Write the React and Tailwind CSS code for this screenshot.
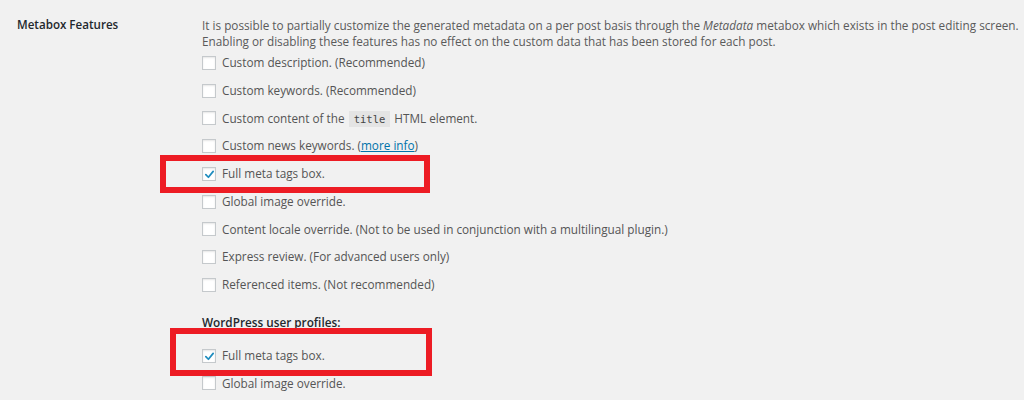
const rows = [
  { label: 'Custom description. (Recommended)' },
  { label: 'Custom keywords. (Recommended)' },
  { label: 'title' },
  { label: 'news' },
  { label: 'Full meta tags box.', checked: true, marked: true },
  { label: 'Global image override.' },
  { label: 'Content locale override. (Not to be used in conjunction with a multilingual plugin.)' },
  { label: 'Express review. (For advanced users only)' },
  { label: 'Referenced items. (Not recommended)' },
];

function Checkbox({ checked }) {
  return (
    <span className="relative flex h-[14px] w-[14px] shrink-0 items-center justify-center border border-[#c5c9cc] bg-white shadow-[inset_0_1px_2px_rgba(0,0,0,0.1)]">
      {checked && (
        <svg width="11" height="11" viewBox="0 0 12 12" className="mt-[1px]">
          <path d="M2 6.2 L4.8 9 L10 2.6" fill="none" stroke="#1e8cbe" strokeWidth="1.9" strokeLinecap="round" strokeLinejoin="round" />
        </svg>
      )}
    </span>
  );
}

function Label({ label }) {
  if (label === 'title') {
    return (
      <span>
        Custom content of the{' '}
        <code className="mx-[1px] bg-[#e4e4e4] px-[5px] py-[2px] font-['DejaVu_Sans_Mono',monospace] text-[10.5px] text-[#444]">title</code>{' '}
        HTML element.
      </span>
    );
  }
  if (label === 'news') {
    return (
      <span>
        Custom news keywords. (<a className="text-[#0073aa] underline">more info</a>)
      </span>
    );
  }
  return <span>{label}</span>;
}

function Row({ row }) {
  return (
    <div className="relative flex h-[27.75px] items-center gap-[6px]">
      <Checkbox checked={row.checked} />
      <Label label={row.label} />
      {row.marked && (
        <div className="pointer-events-none absolute left-[-42px] top-[-5px] h-[38px] w-[270px] border-[6px] border-[#ed1c24]" />
      )}
    </div>
  );
}

export default function App() {
  return (
    <div className="h-[400px] w-[1024px] overflow-hidden bg-[#f1f1f1] font-['Open_Sans',sans-serif] text-[11.75px] text-[#555] whitespace-nowrap">
      <div className="flex pt-[17px]">
        {/* Label column */}
        <div className="w-[202px] shrink-0 pl-[17px] text-[11.6px] font-semibold leading-[16px] text-[#23282d]">
          Metabox Features
        </div>

        {/* Settings column */}
        <div className="flex-1">
          <p className="leading-[16px] text-[#5a5a5a]">
            It is possible to partially customize the generated metadata on a per post basis through the <em>Metadata</em> metabox which exists in the post editing screen.
            <br />
            Enabling or disabling these features has no effect on the custom data that has been stored for each post.
          </p>

          <div>
            {rows.map((row, i) => (
              <Row key={i} row={row} />
            ))}
          </div>

          <div className="mt-[14px] font-semibold leading-[18px] text-[#23282d]">WordPress user profiles:</div>

          <div className="relative mt-[11px] flex h-[27.75px] items-center gap-[6px]">
            <Checkbox checked />
            <span>Full meta tags box.</span>
            <div className="pointer-events-none absolute left-[-32px] top-[-14px] h-[48px] w-[262px] border-[6px] border-[#ed1c24]" />
          </div>
          <div className="flex h-[27.75px] items-center gap-[6px]">
            <Checkbox />
            <span>Global image override.</span>
          </div>
        </div>
      </div>
    </div>
  );
}
